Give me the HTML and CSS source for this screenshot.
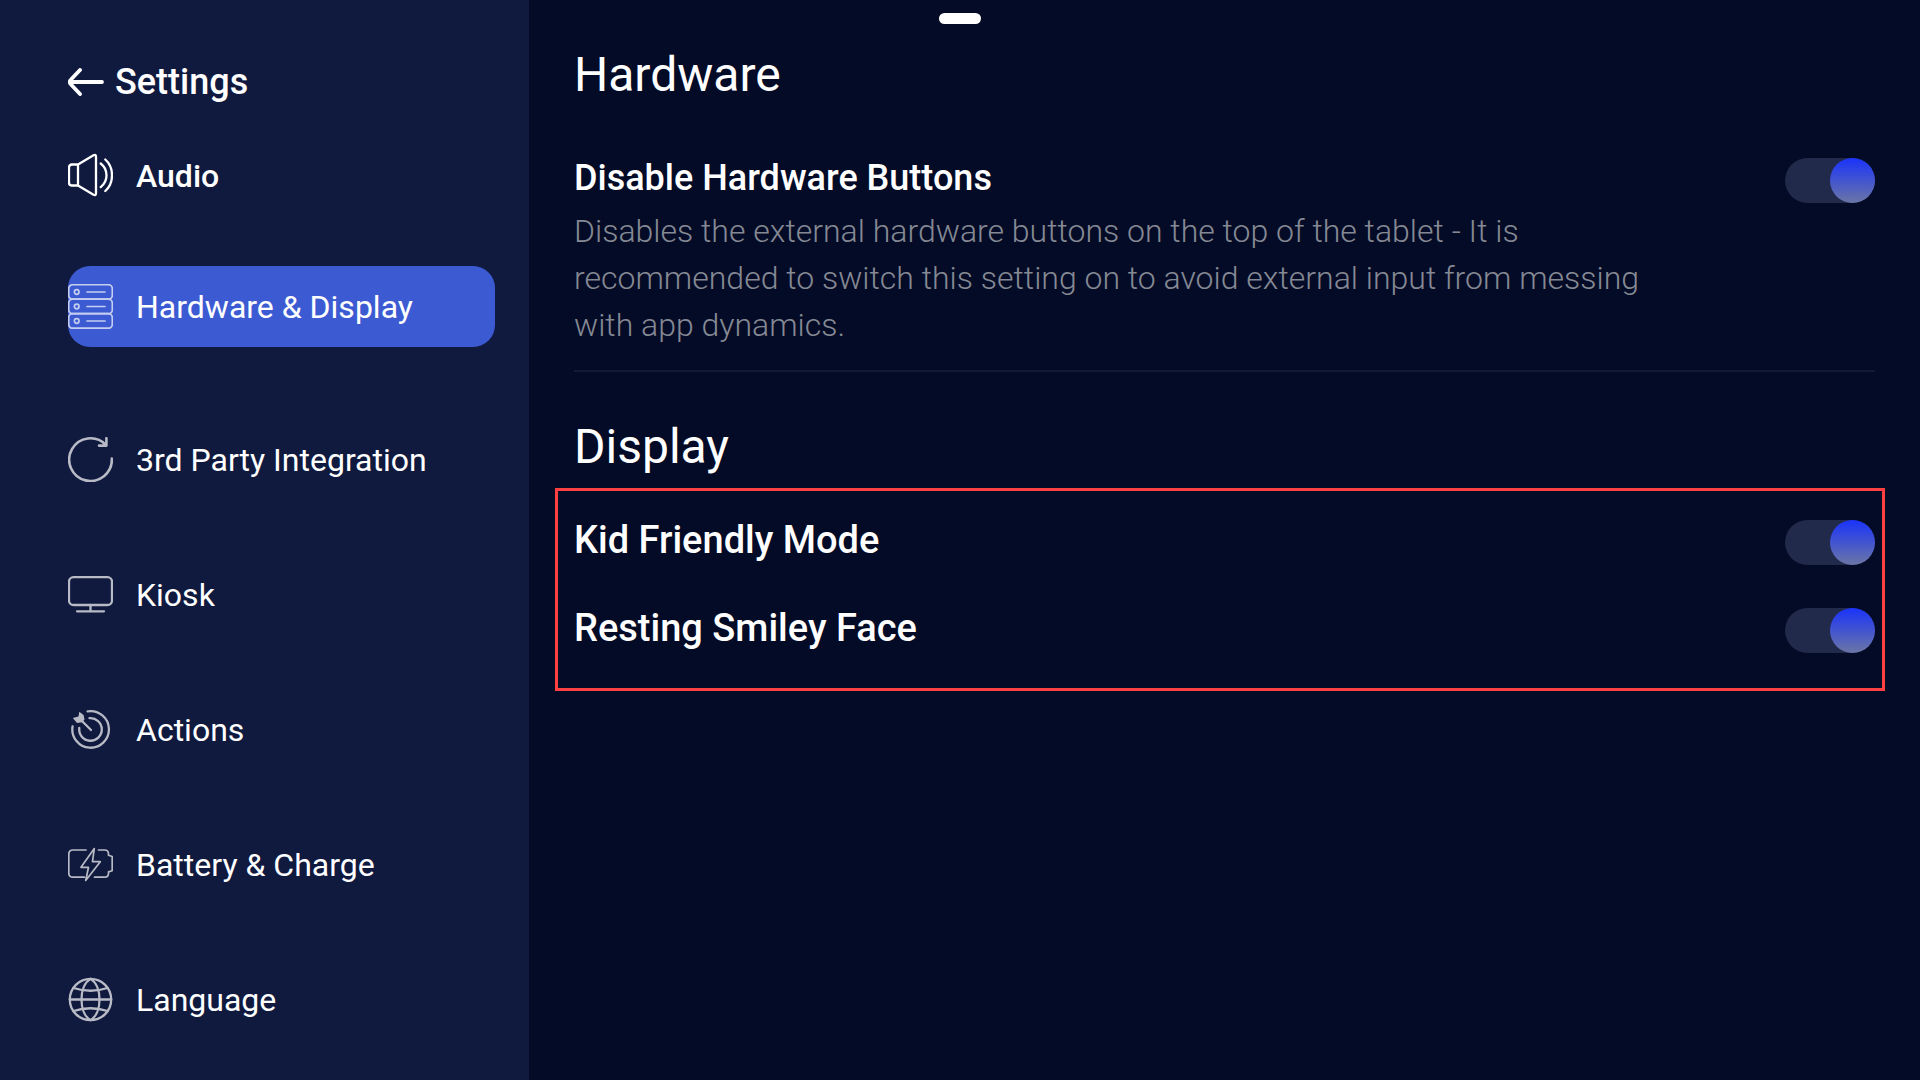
FILE: index.html
```
<!DOCTYPE html>
<html lang="en">

<head>
    <meta charset="UTF-8">
    <meta name="viewport" content="width=device-width, initial-scale=1.0">
    <title>Settings - Hardware &amp; Display</title>
    <link rel="stylesheet" href="styles.css">
</head>

<body>
    <div class="drag-handle"></div>

    <aside class="sidebar">
        <a href="#" class="back-link">
            <svg width="36" height="28" viewBox="0 0 36 28" class="icon-bold">
                <path d="M34 14H2M12 2 3 11.5Q0.5 14 3 16.500L12 26" />
            </svg>
            Settings
        </a>

        <nav class="menu">
            <a href="#" class="menu-item audio">
                <svg class="icon" viewBox="0 0 45 45">
                    <path d="M10 11.500H4Q1 11.500 1 14.500V29.500Q1 32.500 4 32.500H10ZM10 11.500 25.500 2.200Q28 1.200 28 3.500V40.500Q28 42.800 25.500 41.800L10 32.500" />
                    <path d="M32.700 10.500Q38.500 15 38.500 22.300T32.700 34.100M37.300 6.500Q44 12.500 44 22.300T37.300 38" />
                </svg>
                Audio
            </a>
            <a href="#" class="menu-item active" aria-current="page">
                <svg class="icon thin" viewBox="0 0 45 45">
                    <rect x="0.7" y="0.7" width="43.6" height="14.5" rx="4" />
                    <rect x="0.7" y="15.2" width="43.6" height="14.5" rx="4" />
                    <rect x="0.7" y="29.7" width="43.6" height="14.5" rx="4" />
                    <circle cx="8.7" cy="8" r="2.3" />
                    <circle cx="8.7" cy="22.5" r="2.3" />
                    <circle cx="8.7" cy="37" r="2.3" />
                    <path d="M19 8H37M19 22.500H37M19 37H37" />
                </svg>
                Hardware &amp; Display
            </a>
            <a href="#" class="menu-item">
                <svg class="icon" viewBox="0 0 45 45">
                    <path d="M43.800 21.500A21.300 21.300 0 1 1 37.800 7.800M38.400 1.200V8.600H31" stroke-width="2.6" />
                </svg>
                3rd Party Integration
            </a>
            <a href="#" class="menu-item">
                <svg class="icon" viewBox="0 0 45 45">
                    <rect x="1" y="5.2" width="43" height="27.8" rx="4.5" />
                    <path d="M22.500 33V39.300M9 39.300H36" />
                </svg>
                Kiosk
            </a>
            <a href="#" class="menu-item">
                <svg class="icon" viewBox="0 0 45 45">
                    <path d="M19.600 4.400A18.300 18.300 0 1 1 4.600 19.300" />
                    <path d="M21.500 11.200A11.300 11.300 0 1 1 11.300 21" />
                    <path d="M13 13 23 23" />
                    <path class="filled" d="M4.800 11 10.500 9.500 11.300 4.800 15.600 8 16.500 12.500 14.200 15.300 9 16Z" />
                </svg>
                Actions
            </a>
            <a href="#" class="menu-item">
                <svg class="icon thin" viewBox="0 0 45 45">
                    <path d="M18 8H5Q0.800 8 0.800 12.200V31Q0.800 35.200 5 35.200H16.300" />
                    <path d="M30.500 8H36.500Q40.500 8 40.500 12V13.300L44.200 14.500V28.700L40.500 29.900V31.200Q40.500 35.200 36.500 35.200H26.500" />
                    <path d="M26.300 6.500 13 25.300H20.500L17.700 38.500 32.300 19.700H24.500Z" />
                </svg>
                Battery &amp; Charge
            </a>
            <a href="#" class="menu-item">
                <svg class="icon" viewBox="0 0 45 45">
                    <circle cx="22.5" cy="22.5" r="20.7" />
                    <path d="M22.500 1.800C10.500 9 10.500 36 22.500 43.200C34.500 36 34.500 9 22.500 1.800Z" />
                    <path d="M1.800 22.500H43.200M5.500 11Q22.500 16.500 39.500 11M5.500 34Q22.500 28.500 39.500 34" />
                </svg>
                Language
            </a>
        </nav>
    </aside>

    <main class="content">
        <section class="hardware">
            <h1>Hardware</h1>
            <div class="setting">
                <div class="setting-text">
                    <label class="setting-label small" for="disable-buttons">Disable Hardware Buttons</label>
                    <p id="disable-help">Disables the external hardware buttons on the top of the tablet - It is recommended to switch this setting on to avoid external input from messing with app dynamics.</p>
                </div>
                <input type="checkbox" role="switch" class="toggle" id="disable-buttons" aria-describedby="disable-help" checked>
            </div>
        </section>

        <section class="display">
            <h1>Display</h1>
            <div class="highlight">
                <div class="setting">
                    <label class="setting-label" for="kid-mode">Kid Friendly Mode</label>
                    <input type="checkbox" role="switch" class="toggle" id="kid-mode" checked>
                </div>
                <div class="setting">
                    <label class="setting-label" for="smiley-face">Resting Smiley Face</label>
                    <input type="checkbox" role="switch" class="toggle" id="smiley-face" checked>
                </div>
            </div>
        </section>
    </main>
</body>

</html>
```
FILE: styles.css
```
* {
    box-sizing: border-box;
}

body {
    margin: 0;
    min-height: 100vh;
    display: flex;
    background: #040b26;
    color: #fff;
    font-family: Roboto, sans-serif;
}

h1, p {
    margin: 0;
}

/* Small grab bar at the top of the screen */
.drag-handle {
    position: absolute;
    top: 13px;
    left: 50%;
    width: 42px;
    height: 11px;
    border-radius: 6px;
    background: #fff;
    transform: translateX(-50%);
}

/* Sidebar */
.sidebar {
    flex: 0 0 529px;
    padding: 61px 34px 0 68px;
    background: #101a3f;
}

.back-link {
    display: flex;
    align-items: center;
    gap: 11px;
    margin-bottom: 32px;
    color: #fff;
    font-size: 36px;
    font-weight: 500;
    line-height: 42px;
    text-decoration: none;
}

svg {
    flex: none;
    fill: none;
    stroke: #fff;
    stroke-width: 2.3;
    stroke-linecap: round;
    stroke-linejoin: round;
}

.icon-bold {
    stroke-width: 3.8;
}

.icon {
    width: 45px;
    height: 45px;
    opacity: 0.7;
}

.icon.thin {
    stroke-width: 1.7;
}

.filled {
    fill: #fff;
    stroke: none;
}

.menu-item {
    display: flex;
    align-items: center;
    gap: 23px;
    min-height: 81px;
    margin-bottom: 54px;
    border-radius: 22px;
    color: #fff;
    font-size: 32px;
    line-height: 38px;
    text-decoration: none;
}

.menu-item:last-child {
    margin-bottom: 0;
}

.menu-item.audio {
    margin-bottom: 50px;
    font-weight: 500;
}

.menu-item.audio .icon {
    opacity: 1;
}

.menu-item.active {
    margin-bottom: 72px;
    background: #3c5bd3;
}

/* Settings */
.content {
    flex: 1;
    padding: 47px 45px;
}

h1 {
    font-size: 48px;
    font-weight: 400;
    line-height: 56px;
}

.hardware {
    margin-bottom: 47px;
    padding-bottom: 21px;
    border-bottom: 2px solid #131936;
}

.hardware h1 {
    margin-bottom: 53px;
}

.setting {
    display: flex;
    align-items: flex-start;
    justify-content: space-between;
    gap: 110px;
}

.setting-label {
    display: block;
    font-size: 38px;
    font-weight: 500;
    line-height: 44px;
}

.setting-label.small {
    font-size: 36px;
}

.setting p {
    margin-top: 8px;
    color: #858994;
    font-size: 32px;
    font-weight: 300;
    line-height: 47px;
}

.highlight {
    display: flex;
    flex-direction: column;
    gap: 41px;
    margin: 13px -10px 0 -19px;
    padding: 27px 7px 35px 16px;
    border: 3px solid #ff4043;
}

.toggle {
    appearance: none;
    flex: none;
    width: 90px;
    height: 45px;
    margin: 2px 0 0;
    border-radius: 23px;
    background: #222a4b;
    cursor: pointer;
}

.toggle::before {
    content: "";
    display: block;
    width: 45px;
    height: 45px;
    border-radius: 50%;
    background: #6b75a5;
}

.toggle:checked::before {
    margin-left: 45px;
    background: linear-gradient(#1a33fa, #6b76a6);
}
```
